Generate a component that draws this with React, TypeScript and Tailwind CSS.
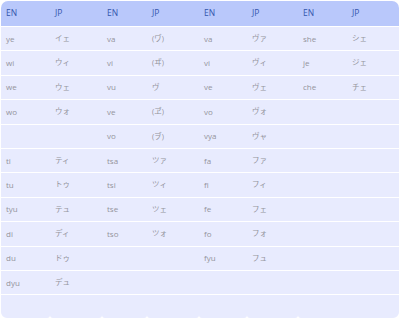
import React from "react";

const widths = [49, 52, 45, 52, 48, 51, 49, 51];

const rows: string[][] = [
  ["ye", "イェ", "va", "(ヷ)", "va", "ヴァ", "she", "シェ"],
  ["wi", "ウィ", "vi", "(ヸ)", "vi", "ヴィ", "je", "ジェ"],
  ["we", "ウェ", "vu", "ヴ", "ve", "ヴェ", "che", "チェ"],
  ["wo", "ウォ", "ve", "(ヹ)", "vo", "ヴォ", "", ""],
  ["", "", "vo", "(ヺ)", "vya", "ヴャ", "", ""],
  ["ti", "ティ", "tsa", "ツァ", "fa", "ファ", "", ""],
  ["tu", "トゥ", "tsi", "ツィ", "fi", "フィ", "", ""],
  ["tyu", "テュ", "tse", "ツェ", "fe", "フェ", "", ""],
  ["di", "ディ", "tso", "ツォ", "fo", "フォ", "", ""],
  ["du", "ドゥ", "", "", "fyu", "フュ", "", ""],
  ["dyu", "デュ", "", "", "", "", "", ""],
];

const headers = ["EN", "JP", "EN", "JP", "EN", "JP", "EN", "JP"];

export default function App() {
  return (
    <div
      className="w-[400px] h-[322px] bg-white pt-[1px] px-[1px]"
      style={{ fontFamily: '"Open Sans", "Noto Sans CJK JP", sans-serif' }}
    >
      <div className="w-[398px] flex flex-col">
        <div className="flex h-[25px] bg-[#b9c8fb] rounded-t-[7px] items-center">
          {headers.map((h, i) => (
            <div
              key={i}
              style={{ width: widths[i] }}
              className="pl-[5px] text-[8.5px] text-[#3556ad] font-medium"
            >
              {h}
            </div>
          ))}
        </div>
        {rows.map((r, ri) => (
          <div
            key={ri}
            className="flex h-[24.4px] bg-[#e8ebfe] border-t border-white items-center"
          >
            {r.map((c, ci) => (
              <div
                key={ci}
                style={{ width: widths[ci] }}
                className={`pl-[5px] text-[#94949c] ${ci % 2 === 1 ? "text-[7.5px]" : "text-[8px]"}`}
              >
                {c}
              </div>
            ))}
          </div>
        ))}
        <div className="flex h-[23.5px] border-t border-white">
          <div className="w-[49px] bg-[#e8ebfe] rounded-bl-[6px] rounded-br-[3px]" />
          <div className="w-[52px] bg-[#e8ebfe] rounded-b-[3px]" />
          <div className="w-[45px] bg-[#e8ebfe] rounded-b-[3px]" />
          <div className="w-[52px] bg-[#e8ebfe] rounded-b-[3px]" />
          <div className="w-[48px] bg-[#e8ebfe] rounded-b-[3px]" />
          <div className="w-[51px] bg-[#e8ebfe] rounded-b-[3px]" />
          <div className="w-[101px] bg-[#e8ebfe] rounded-bl-[3px] rounded-br-[6px]" />
        </div>
      </div>
    </div>
  );
}
